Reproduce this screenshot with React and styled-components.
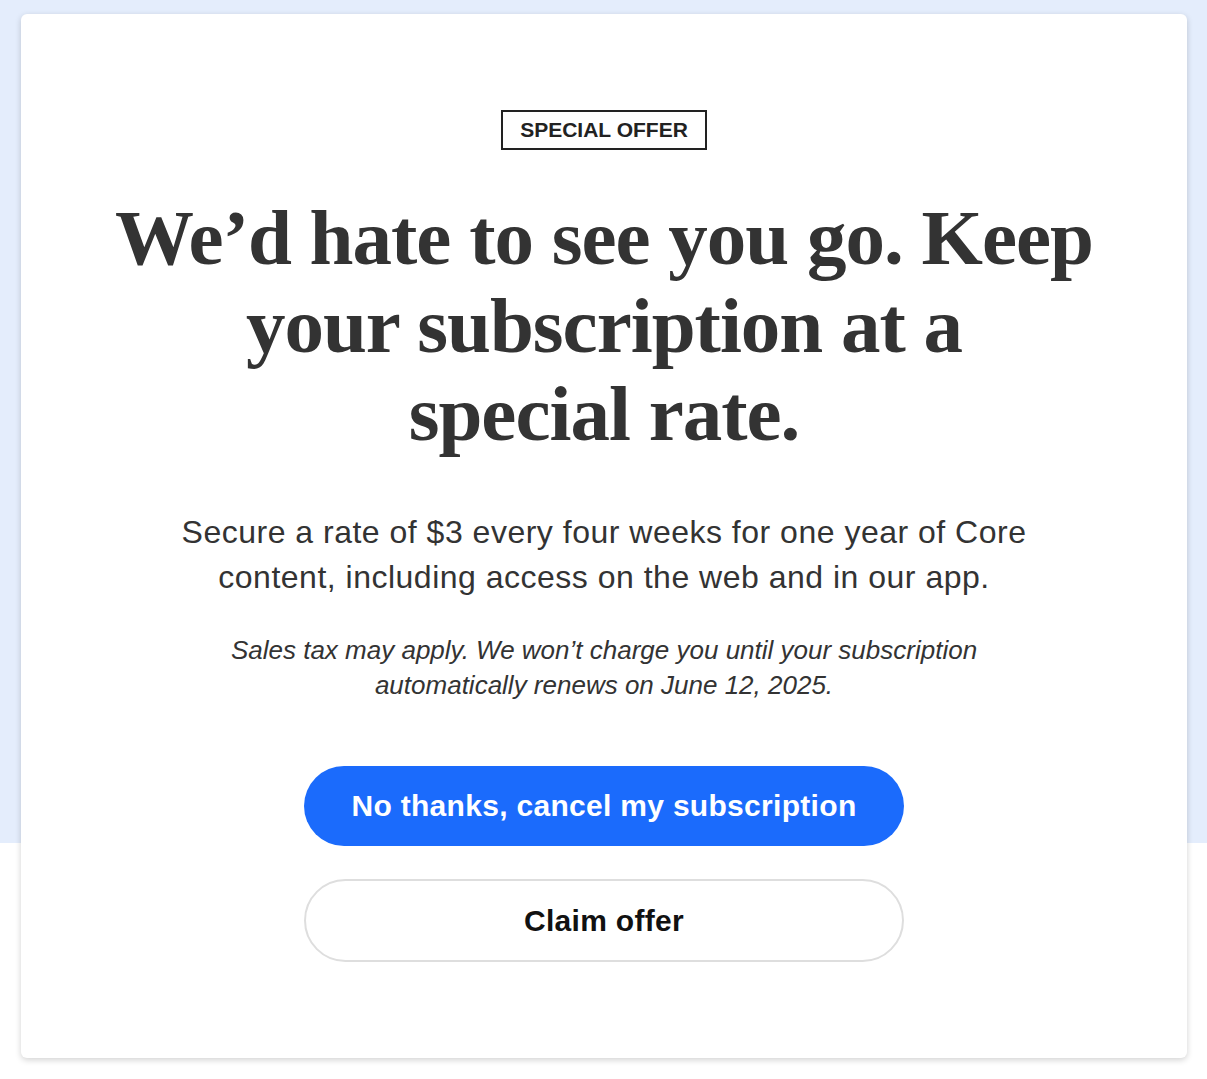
import React from 'react';
import styled, { createGlobalStyle } from 'styled-components';

const GlobalStyle = createGlobalStyle`
    html, body {
        margin: 0;
        padding: 0;
    }
    body {
        min-height: 1079px;
        background: linear-gradient(to bottom, #e4edfc 0, #e4edfc 843px, #ffffff 843px);
        font-family: "Liberation Sans", Arial, sans-serif;
        color: #333;
    }
`;

const Page = styled.div`
    padding: 14px 20px 21px 21px;
    box-sizing: border-box;
`;

const Card = styled.div`
    background: #fff;
    border-radius: 6px;
    box-shadow: 0 2px 6px rgba(0, 0, 0, 0.18);
    padding: 96px 40px 96px;
    display: flex;
    flex-direction: column;
    align-items: center;
    text-align: center;
    box-sizing: border-box;
    min-height: 1044px;
`;

const Badge = styled.div`
    border: 2px solid #222;
    padding: 0 17px;
    height: 40px;
    box-sizing: border-box;
    display: flex;
    align-items: center;
    font-size: 21px;
    font-weight: 700;
    color: #222;
`;

const Headline = styled.h1`
    margin: 44px 0 0;
    font-family: "Liberation Serif", "Times New Roman", serif;
    font-weight: 700;
    font-size: 79px;
    line-height: 88px;
    letter-spacing: -1px;
    color: #333;
`;

const Lead = styled.p`
    margin: 52px 0 0;
    max-width: 900px;
    font-size: 32px;
    line-height: 45px;
    letter-spacing: 0.5px;
    color: #333;
`;

const Note = styled.p`
    margin: 33px 0 0;
    max-width: 800px;
    font-size: 26px;
    line-height: 35px;
    font-style: italic;
    color: #333;
`;

const Actions = styled.div`
    margin-top: 63px;
    display: flex;
    flex-direction: column;
    gap: 33px;
    width: 600px;
`;

const Button = styled.button`
    height: ${p => (p.$primary ? '80px' : '83px')};
    border-radius: 42px;
    border: ${p => (p.$primary ? 'none' : '2px solid #dedede')};
    background: ${p => (p.$primary ? '#1b6bfc' : '#fff')};
    color: ${p => (p.$primary ? '#fff' : '#111')};
    font-family: "Liberation Sans", Arial, sans-serif;
    font-size: 30px;
    font-weight: 700;
    letter-spacing: 0.3px;
    cursor: pointer;
`;

const App = () => {
    return (
        <>
            <GlobalStyle />
            <Page>
                <Card>
                    <Badge>SPECIAL OFFER</Badge>
                    <Headline>
                        We’d hate to see you go. Keep<br />
                        your subscription at a<br />
                        special rate.
                    </Headline>
                    <Lead>Secure a rate of $3 every four weeks for one year of Core content, including access on the web and in our app.</Lead>
                    <Note>Sales tax may apply. We won’t charge you until your subscription automatically renews on June 12, 2025.</Note>
                    <Actions>
                        <Button $primary>No thanks, cancel my subscription</Button>
                        <Button>Claim offer</Button>
                    </Actions>
                </Card>
            </Page>
        </>
    );
};

export default App;
